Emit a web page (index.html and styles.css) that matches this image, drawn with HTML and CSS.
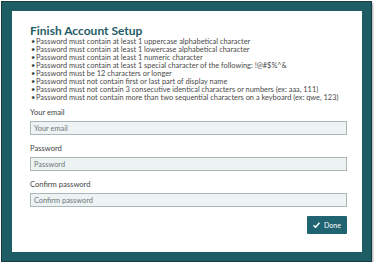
FILE: index.html
```html
<!DOCTYPE html>
<html lang="en">
<head>
  <meta charset="UTF-8">
  <title>Finish Account Setup</title>
  <link rel="stylesheet" href="styles.css">
</head>
<body>

  <div class="frame">
    <div class="panel">
      <h1>Finish Account Setup</h1>
      <ul class="rules">
        <li>Password must contain at least 1 uppercase alphabetical character</li>
        <li>Password must contain at least 1 lowercase alphabetical character</li>
        <li>Password must contain at least 1 numeric character</li>
        <li>Password must contain at least 1 special character of the following: !@#$%^&amp;</li>
        <li>Password must be 12 characters or longer</li>
        <li>Password must not contain first or last part of display name</li>
        <li>Password must not contain 3 consecutive identical characters or numbers (ex: aaa, 111)</li>
        <li>Password must not contain more than two sequential characters on a keyboard (ex: qwe, 123)</li>
      </ul>

      <div class="form-group">
        <label for="email">Your email</label>
        <input type="text" id="email" placeholder="Your email">
      </div>

      <div class="form-group">
        <label for="password">Password</label>
        <input type="password" id="password" placeholder="Password">
      </div>

      <div class="form-group">
        <label for="confirm">Confirm password</label>
        <input type="password" id="confirm" placeholder="Confirm password">
      </div>

      <div class="actions">
        <button type="button">
          <svg width="7" height="6" viewBox="0 0 14 12"><path d="M1 6.5 L5 10.5 L13 1.5" fill="none" stroke="#fff" stroke-width="3"/></svg>
          Done
        </button>
      </div>
    </div>
  </div>

</body>
</html>
```

FILE: styles.css
```css
body {
  margin: 0;
  background-color: #fff;
  font-family: 'Lato', sans-serif;
}

.frame {
  box-sizing: border-box;
  width: 371px;
  height: 261px;
  margin: 1px 0 0 1px;
  border: 1px solid #163d42;
  background-color: #1e5d64;
  padding: 9px 9px 9px 10px;
  box-shadow: 1px 2px 2px rgba(0, 0, 0, 0.35);
}

.panel {
  box-sizing: border-box;
  height: 100%;
  background-color: #fff;
  padding: 12px 15px 0 18px;
}

h1 {
  margin: 0;
  font-size: 12px;
  line-height: 15px;
  font-weight: 700;
  color: #1f5d66;
}

.rules {
  list-style: none;
  margin: 0 0 6px 0;
  padding: 0;
}

.rules li {
  font-size: 7.4px;
  line-height: 8px;
  color: #4a4a4a;
  white-space: nowrap;
}

.rules li::before {
  content: "\2022";
  display: inline-block;
  width: 5px;
  padding-left: 1px;
}

.form-group {
  margin-bottom: 9px;
}

.form-group label {
  display: block;
  font-size: 7.6px;
  line-height: 8px;
  color: #444;
  margin-bottom: 5px;
}

.form-group input {
  box-sizing: border-box;
  display: block;
  width: 100%;
  height: 14px;
  margin: 0;
  padding: 0 3px;
  font-family: 'Lato', sans-serif;
  font-size: 7.4px;
  color: #555;
  background-color: #edf3f3;
  border: 1px solid #aab8ba;
  border-radius: 0;
}

.form-group input::placeholder {
  color: #6f7778;
}

.actions {
  display: flex;
  justify-content: flex-end;
  margin-top: 9px;
}

button {
  display: flex;
  align-items: center;
  gap: 4px;
  height: 18px;
  width: 40px;
  justify-content: center;
  padding: 0;
  border: none;
  border-radius: 1px;
  background-color: #1f6470;
  color: #fff;
  font-family: 'Lato', sans-serif;
  font-size: 7px;
}
```
